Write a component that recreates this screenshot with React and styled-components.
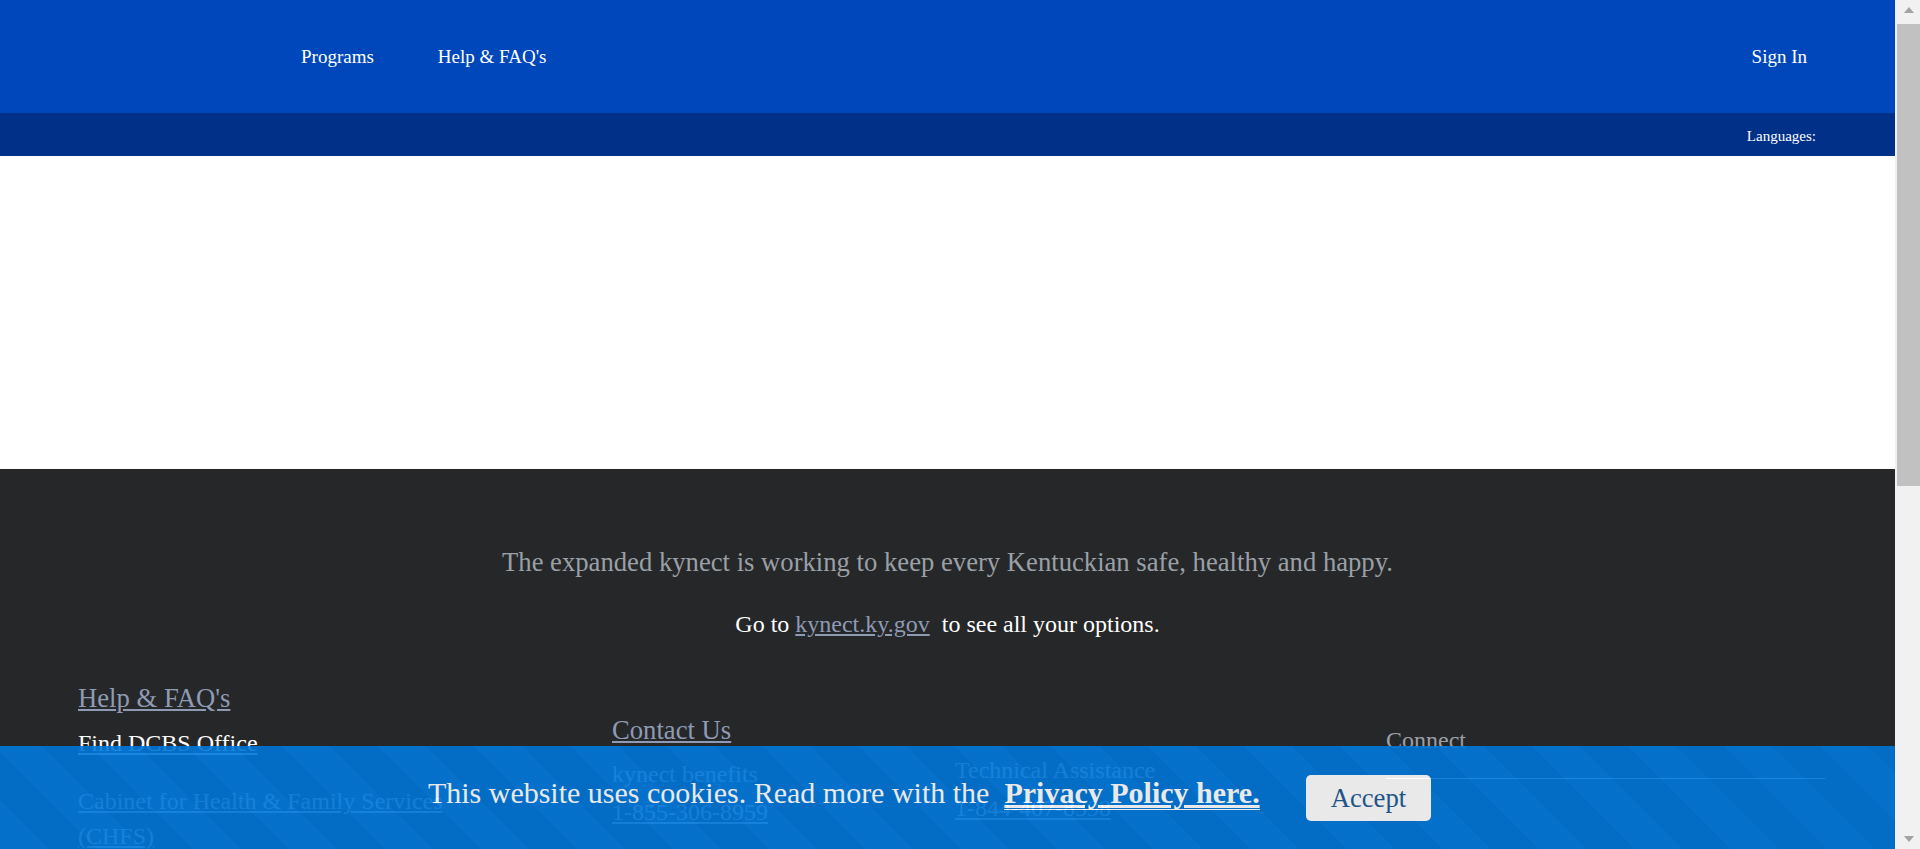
import styled, { createGlobalStyle } from "styled-components";

const GlobalStyle = createGlobalStyle`
  html, body {
    margin: 0;
    padding: 0;
  }
  body {
    font-family: "Liberation Serif", "Times New Roman", serif;
    background: #fff;
    padding-right: 25px;
  }
  * { box-sizing: border-box; }
`;

const TopBar = styled.header`
  height: 113px;
  background: #0047bb;
  display: flex;
  align-items: center;
  gap: 64px;
  padding: 0 88px 0 301px;
`;

const NavLink = styled.a`
  color: #fff;
  font-size: 19px;
  text-decoration: none;
  cursor: pointer;
  ${(p) => p.$right && "margin-left: auto;"}
`;

const LangBar = styled.div`
  height: 43px;
  background: #003087;
  display: flex;
  justify-content: flex-end;
  align-items: center;
  padding: 4px 79px 0 0;
  color: #fff;
  font-size: 15px;
`;

const Hero = styled.main`
  height: 313px;
  background: #fff;
`;

const Footer = styled.footer`
  background: #262729;
  min-height: 1031px;
  padding: 77px 0 120px;
`;

const Tagline = styled.p`
  margin: 0;
  text-align: center;
  font-size: 26.67px;
  line-height: 32px;
  color: #9aa0a6;
`;

const GoTo = styled.p`
  margin: 32px 0 0;
  text-align: center;
  font-size: 24px;
  line-height: 28px;
  color: #fff;
`;

const GrayLink = styled.a`
  color: #8e9bb4;
  text-decoration: underline;
  cursor: pointer;
`;

const Columns = styled.div`
  display: grid;
  grid-template-columns: 534px 774px 439px;
  align-items: start;
  margin-top: 44px;
  padding-left: 78px;
`;

const Column = styled.div`
  display: flex;
  flex-direction: column;
  align-items: flex-start;
  margin-top: ${(p) => p.$top || 0}px;
`;

const Heading = styled.a`
  font-size: 26.67px;
  line-height: 32px;
  color: #8e9bb4;
  text-decoration: underline;
  cursor: pointer;
`;

const FooterLink = styled.a`
  display: block;
  max-width: 400px;
  font-size: 24px;
  line-height: ${(p) => p.$lh || 28}px;
  margin-top: ${(p) => p.$top || 0}px;
  color: ${(p) => p.$color || "#c8ccd2"};
  text-decoration: underline;
  cursor: pointer;
`;

const Label = styled.div`
  font-size: 24px;
  line-height: 28px;
  color: ${(p) => p.$color || "#c8ccd2"};
`;

const ContactGrid = styled.div`
  display: grid;
  grid-template-columns: 343px 1fr;
  margin-top: 14px;
  width: 100%;
`;

const ContactItem = styled.div`
  display: flex;
  flex-direction: column;
  align-items: flex-start;
  gap: 10px;
  margin-top: ${(p) => p.$shift || 0}px;
`;

const Rule = styled.hr`
  width: 439px;
  margin: 24px 0 0;
  border: none;
  border-top: 1px solid #fff;
`;

const CookieBar = styled.div`
  position: fixed;
  left: 0;
  right: 25px;
  bottom: 0;
  height: 103px;
  opacity: 0.9;
  background-color: #0078dc;
  background-image: repeating-linear-gradient(
    45deg,
    rgba(255, 255, 255, 0.012) 0 34px,
    rgba(0, 0, 0, 0.018) 34px 68px
  );
  display: flex;
  align-items: center;
  justify-content: center;
  gap: 46px;
  padding-right: 36px;
`;

const CookieText = styled.p`
  margin: 0 0 9px;
  color: #fff;
  font-size: 30px;
`;

const PolicyLink = styled.a`
  color: #fff;
  font-weight: bold;
  text-decoration: underline;
  border-bottom: 1px solid #fff;
  cursor: pointer;
`;

const AcceptButton = styled.button`
  background: #fff;
  border: none;
  border-radius: 5px;
  padding: 7px 25px;
  font-family: inherit;
  font-size: 26.67px;
  line-height: 32px;
  color: #215a92;
  cursor: pointer;
`;

/* browser scrollbar as it shows in the capture */
const ScrollTrack = styled.div`
  position: fixed;
  top: 0;
  right: 0;
  bottom: 0;
  width: 25px;
  background: #f1f1f1;
  display: flex;
  flex-direction: column;
  align-items: center;
  padding: 7px 0 7px 2px;
`;

const ScrollArrow = styled.div`
  width: 0;
  height: 0;
  border-left: 5px solid transparent;
  border-right: 5px solid transparent;
  ${(p) =>
    p.$down
      ? "border-top: 6px solid #a3a3a3; margin-top: auto;"
      : "border-bottom: 6px solid #a3a3a3;"}
`;

const ScrollThumb = styled.div`
  width: 100%;
  height: 462px;
  margin-top: 11px;
  background: #c1c1c1;
`;

export default function App() {
  return (
    <>
      <GlobalStyle />
      <TopBar>
        <NavLink>Programs</NavLink>
        <NavLink>Help &amp; FAQ's</NavLink>
        <NavLink $right>Sign In</NavLink>
      </TopBar>
      <LangBar>Languages:</LangBar>
      <Hero />
      <Footer>
        <Tagline>
          The expanded kynect is working to keep every Kentuckian safe, healthy and happy.
        </Tagline>
        <GoTo>
          Go to <GrayLink>kynect.ky.gov</GrayLink>{"\u00a0 "}to see all your options.
        </GoTo>
        <Columns>
          <Column>
            <Heading>Help &amp; FAQ's</Heading>
            <FooterLink $top={15} $color="#fff">Find DCBS Office</FooterLink>
            <FooterLink $top={27} $lh={35}>
              Cabinet for Health &amp; Family Services (CHFS)
            </FooterLink>
            <FooterLink $top={12} $lh={35}>Kentucky.gov</FooterLink>
            <FooterLink $top={12} $lh={35}>Privacy Policy</FooterLink>
            <FooterLink $top={12} $lh={35}>Accessibility</FooterLink>
          </Column>
          <Column $top={32}>
            <Heading>Contact Us</Heading>
            <ContactGrid>
              <ContactItem>
                <Label>kynect benefits</Label>
                <FooterLink>1-855-306-8959</FooterLink>
              </ContactItem>
              <ContactItem $shift={-4}>
                <Label>Technical Assistance</Label>
                <FooterLink>1-844-407-8398</FooterLink>
              </ContactItem>
            </ContactGrid>
          </Column>
          <Column $top={44}>
            <Label $color="#9aa0a6">Connect</Label>
            <Rule />
          </Column>
        </Columns>
      </Footer>
      <CookieBar>
        <CookieText>
          This website uses cookies. Read more with the{"\u00a0\u00a0"}
          <PolicyLink>Privacy Policy here.</PolicyLink>
        </CookieText>
        <AcceptButton>Accept</AcceptButton>
      </CookieBar>
      <ScrollTrack>
        <ScrollArrow />
        <ScrollThumb />
        <ScrollArrow $down />
      </ScrollTrack>
    </>
  );
}
